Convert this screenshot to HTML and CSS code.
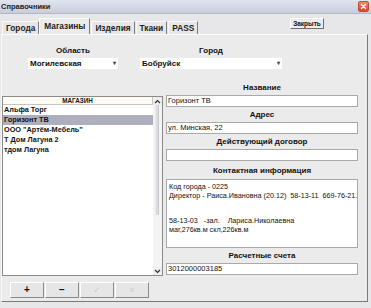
FILE: index.html
```
<!DOCTYPE html>
<html>
<head>
<meta charset="utf-8">
<link rel="stylesheet" href="styles.css">
</head>
<body>
<div class="window">
  <div class="titlebar">
    <span class="title">Справочники</span>
    <span class="xbtn"><svg width="11" height="11" viewBox="0 0 11 11"><path d="M3 3 L8 8 M8 3 L3 8" stroke="#fff" stroke-width="1.6" stroke-linecap="round"/></svg></span>
  </div>
  <div class="tabbar">
    <div class="tabs">
      <div class="tab">Города</div>
      <div class="tab active">Магазины</div>
      <div class="tab">Изделия</div>
      <div class="tab">Ткани</div>
      <div class="tab">PASS</div>
    </div>
    <div class="closebtn">Закрыть</div>
  </div>
  <div class="panel">
    <div class="filters">
      <div class="filter f1">
        <div class="flabel">Область</div>
        <div class="select">Могилевская<span class="arr">▾</span></div>
      </div>
      <div class="filter f2">
        <div class="flabel">Город</div>
        <div class="select">Бобруйск<span class="arr">▾</span></div>
      </div>
    </div>
    <div class="main">
      <div class="left">
        <div class="list">
          <div class="listbody">
            <div class="lhead">МАГАЗИН</div>
            <div class="row">Альфа Торг</div>
            <div class="row sel">Горизонт ТВ</div>
            <div class="row">ООО "Артём-Мебель"</div>
            <div class="row">Т Дом Лагуна 2</div>
            <div class="row">тдом Лагуна</div>
          </div>
          <div class="scroll">
            <div class="sbtn"><svg width="7" height="5" viewBox="0 0 7 5"><path d="M1 4 L3.5 1.5 L6 4" fill="none" stroke="#333" stroke-width="1.2"/></svg></div>
            <div class="strack"><div class="thumb"></div></div>
            <div class="sbtn"><svg width="7" height="5" viewBox="0 0 7 5"><path d="M1 1 L3.5 3.5 L6 1" fill="none" stroke="#333" stroke-width="1.2"/></svg></div>
          </div>
        </div>
        <div class="btns">
          <div class="btn">+</div>
          <div class="btn">−</div>
          <div class="btn dis">✓</div>
          <div class="btn dis">×</div>
        </div>
      </div>
      <div class="right">
        <div class="label">Название</div>
        <div class="input">Горизонт ТВ</div>
        <div class="label">Адрес</div>
        <div class="input">ул. Минская, 22</div>
        <div class="label">Действующий договор</div>
        <div class="input"></div>
        <div class="label label-wide">Контактная информация</div>
        <div class="textarea">Код города - 0225
Директор - Раиса.Ивановна (20.12)  58-13-11  669-76-21.


58-13-03   -зал.    Лариса.Николаевна
маг,276кв.м скл,226кв.м</div>
        <div class="label">Расчетные счета</div>
        <div class="input">3012000003185</div>
      </div>
    </div>
  </div>
</div>
</body>
</html>
```
FILE: styles.css
```
* { box-sizing: border-box; }
html, body { margin: 0; padding: 0; }
body {
  width: 371px;
  height: 308px;
  overflow: hidden;
  background: #e7e7e9;
  font-family: "Liberation Sans", Arial, sans-serif;
  color: #111;
}
.window { width: 371px; height: 308px; display: flex; flex-direction: column; }
.titlebar {
  height: 14px;
  display: flex;
  align-items: center;
  justify-content: space-between;
  padding: 0 2px 0 1px;
  background: linear-gradient(#e0e4ee, #c8cdda);
  border-bottom: 1px solid #b3b8c6;
}
.title { font-size: 7.5px; font-weight: bold; color: #222; }
.xbtn {
  width: 11px; height: 11px;
  border-radius: 2px;
  background: linear-gradient(#ee8a70, #d4452a);
  border: 1px solid #c25038;
  display: flex; align-items: center; justify-content: center;
}
.xbtn svg { display: block; width: 9px; height: 9px; }
.tabbar {
  height: 20px;
  display: flex;
  align-items: flex-start;
  padding-left: 2px;
}
.tabs { display: flex; align-items: flex-end; height: 20px; }
.tab {
  height: 13px;
  padding: 0 3px;
  font-size: 8.3px;
  font-weight: bold;
  line-height: 12px;
  color: #222;
  background: #e7e7e8;
  border-top: 1px solid #fafafa;
  border-left: 1px solid #fafafa;
  border-right: 1px solid #7d7d7d;
  margin-right: 1px;
}
.tab.active {
  height: 16px;
  line-height: 14px;
  padding: 0 4px;
  background: #ebebec;
  margin-left: -1px;
}
.closebtn {
  margin-left: auto;
  margin-right: 47px;
  margin-top: 4px;
  width: 34px;
  height: 11px;
  font-size: 6.5px;
  font-weight: bold;
  line-height: 9px;
  text-align: center;
  background: #ececec;
  border-top: 1px solid #fff;
  border-left: 1px solid #fff;
  border-right: 1px solid #6e6e6e;
  border-bottom: 1px solid #6e6e6e;
}
.panel {
  margin-left: 1px;
  width: 367px;
  height: 268px;
  border-top: 1px solid #fbfbfb;
  border-left: 1px solid #fbfbfb;
  border-right: 1px solid #7a7a7a;
  border-bottom: 1px solid #7a7a7a;
  background: #ebebec;
}
.filters { display: flex; padding-top: 11px; padding-left: 26px; height: 48px; }
.filter { display: flex; flex-direction: column; align-items: stretch; }
.f1 { width: 90px; }
.f2 { width: 142px; margin-left: 22px; }
.flabel { font-size: 8px; font-weight: bold; line-height: 10px; text-align: center; }
.select {
  margin-top: 2px;
  height: 11px;
  background: #fff;
  font-size: 8px;
  font-weight: bold;
  line-height: 11px;
  padding-left: 2px;
  display: flex;
  justify-content: space-between;
}
.arr { font-size: 6px; color: #444; padding-right: 2px; }
.main { display: flex; align-items: flex-start; }
.left { width: 161px; padding-top: 13px; }
.list {
  height: 180px;
  display: flex;
  border: 1px solid #8a8a8a;
  background: #fff;
}
.listbody { flex: 1; }
.lhead {
  height: 8px;
  font-size: 6.3px;
  font-weight: bold;
  line-height: 7px;
  text-align: center;
  background: #fdfbf4;
  border-bottom: 1px solid #c4c4c4;
  border-right: 1px solid #c4c4c4;
}
.row {
  height: 10px;
  font-size: 7.3px;
  font-weight: bold;
  line-height: 10px;
  padding-left: 1px;
  white-space: nowrap;
}
.row.sel { background: #aeafbe; }
.scroll { width: 9px; display: flex; flex-direction: column; background: #f4f4f5; }
.sbtn { height: 8px; display: flex; align-items: center; justify-content: center; background: #eeeeef; }
.strack { flex: 1; position: relative; }
.thumb {
  position: absolute;
  left: 2px; top: 0;
  width: 4px; height: 110px;
  background: #dcdce0;
  border-left: 1px solid #e9e9ec;
  border-right: 1px solid #c8c8cc;
}
.btns { display: flex; gap: 1px; margin-top: 6px; padding-left: 8px; }
.btn {
  width: 34px;
  height: 16px;
  font-size: 10px;
  font-weight: bold;
  line-height: 14px;
  text-align: center;
  background: #e6e6e7;
  border-top: 1px solid #fff;
  border-left: 1px solid #fff;
  border-right: 1px solid #8a8a8a;
  border-bottom: 1px solid #8a8a8a;
}
.btn.dis { color: #c8c8c8; font-weight: normal; font-size: 9px; }
.right { width: 192px; margin-left: 3px; display: flex; flex-direction: column; }
.label { font-size: 8px; font-weight: bold; line-height: 10px; text-align: center; margin-top: 3px; }
.label:first-child { margin-top: 0; }
.label-wide { margin-top: 5px; }
.input {
  margin-top: 2px;
  height: 12px;
  background: #fff;
  border: 1px solid #a9a9a9;
  font-size: 7.5px;
  line-height: 10px;
  padding-left: 1px;
  white-space: nowrap;
}
.textarea {
  margin-top: 3px;
  height: 69px;
  background: #fff;
  border: 1px solid #a9a9a9;
  font-size: 7.2px;
  line-height: 8.5px;
  padding: 3px 2px;
  white-space: pre;
  overflow: hidden;
}
```
